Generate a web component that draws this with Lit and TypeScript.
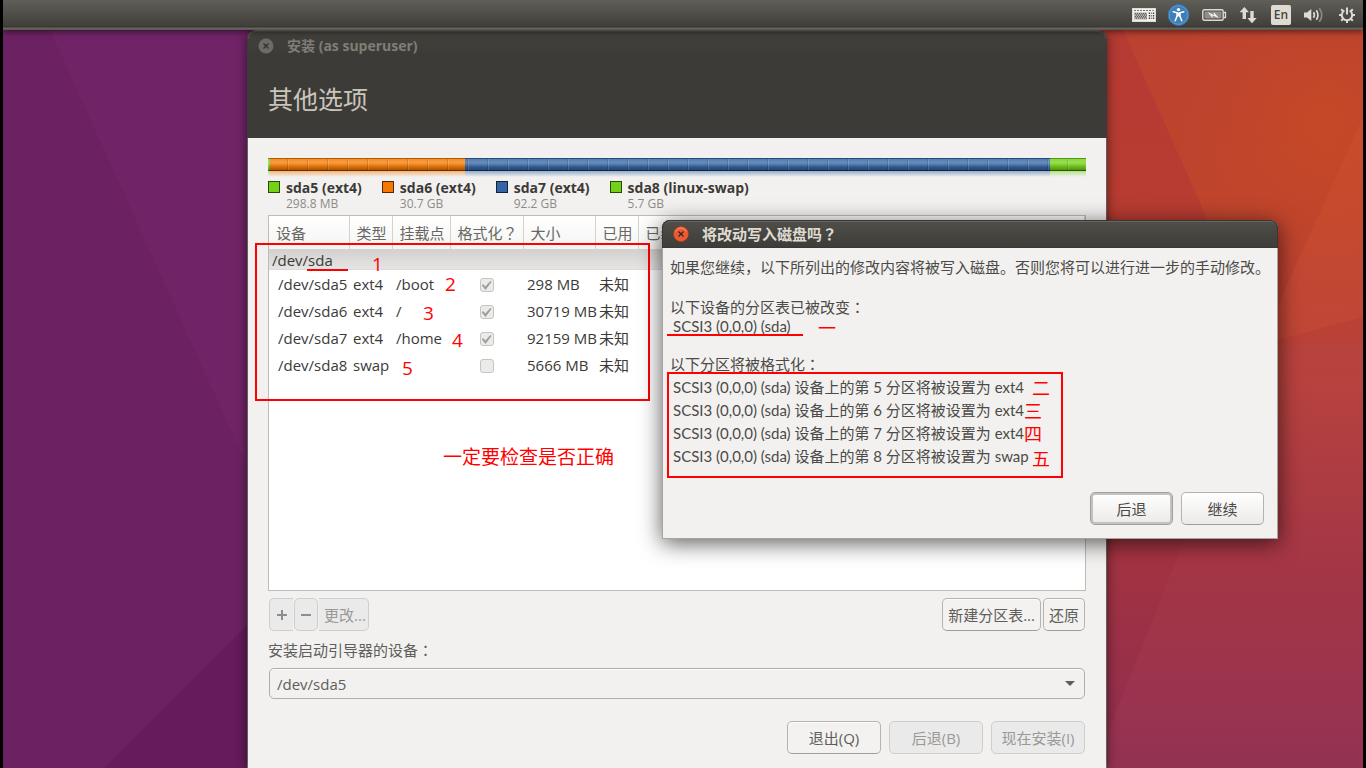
import { LitElement, html, css, svg } from "lit";
import { customElement } from "lit/decorators.js";
import { classMap } from "lit/directives/class-map.js";
import { styleMap } from "lit/directives/style-map.js";

const fontStack = css`"Open Sans", "Noto Sans CJK SC", sans-serif`;

interface Partition {
  device: string;
  type: string;
  mount: string;
  format: boolean;
  size: string;
  used: string;
}

const partitions: Partition[] = [
  { device: "/dev/sda5", type: "ext4", mount: "/boot", format: true, size: "298 MB", used: "未知" },
  { device: "/dev/sda6", type: "ext4", mount: "/", format: true, size: "30719 MB", used: "未知" },
  { device: "/dev/sda7", type: "ext4", mount: "/home", format: true, size: "92159 MB", used: "未知" },
  { device: "/dev/sda8", type: "swap", mount: "", format: false, size: "5666 MB", used: "未知" },
];

const segments = [
  { name: "sda5 (ext4)", size: "298.8 MB", color: "#73d216", share: 2 },
  { name: "sda6 (ext4)", size: "30.7 GB", color: "#f57900", share: 195 },
  { name: "sda7 (ext4)", size: "92.2 GB", color: "#3465a4", share: 585 },
  { name: "sda8 (linux-swap)", size: "5.7 GB", color: "#73d216", share: 36 },
];

const formatted = [
  { part: "5", fs: "ext4" },
  { part: "6", fs: "ext4" },
  { part: "7", fs: "ext4" },
  { part: "8", fs: "swap" },
];

interface Note {
  text: string;
  x: number;
  y: number;
}

// Offsets are relative to the window each note belongs to.
const windowNotes: Note[] = [
  { text: "1", x: 124, y: 219 },
  { text: "2", x: 197, y: 239 },
  { text: "3", x: 175, y: 268 },
  { text: "4", x: 204, y: 295 },
  { text: "5", x: 154, y: 323 },
  { text: "一定要检查是否正确", x: 195, y: 412 },
];

const dialogNotes: Note[] = [
  { text: "一", x: 156, y: 94 },
  { text: "二", x: 370, y: 154 },
  { text: "三", x: 362, y: 177 },
  { text: "四", x: 362, y: 200 },
  { text: "五", x: 370, y: 225 },
];

const renderNotes = (notes: Note[]) =>
  notes.map(
    (n) => html`<span class="note" style=${styleMap({ left: `${n.x}px`, top: `${n.y}px` })}>${n.text}</span>`
  );

const noteStyles = css`
  .note {
    position: absolute;
    color: #f00;
    font-size: 19px;
    line-height: 28px;
    white-space: nowrap;
    pointer-events: none;
  }
  .box,
  .underline {
    position: absolute;
    pointer-events: none;
  }
  .box {
    border: 2px solid #f00;
  }
  .underline {
    height: 2px;
    background: #f00;
  }
`;

const controlStyles = css`
  * {
    box-sizing: border-box;
  }
  button,
  select {
    font: inherit;
    color: inherit;
    margin: 0;
  }
  .btn {
    height: 33px;
    padding: 0 5px;
    border: 1px solid #b5b3af;
    border-bottom-color: #9f9d99;
    border-radius: 5px;
    background: #f3f2f1;
    box-shadow: inset 0 1px #fcfcfb;
    color: #5f5d59;
    white-space: nowrap;
  }
  .btn:disabled {
    background: #eaeaea;
    border-color: #cfcecb;
    box-shadow: none;
    color: #9b9995;
  }
  .wide {
    font-family: "Noto Sans CJK JP", sans-serif;
  }
  .close {
    display: grid;
    width: 16px;
    height: 16px;
    padding: 0;
    border: 0;
    background: none;
  }
`;

@customElement("desktop-wallpaper")
class DesktopWallpaper extends LitElement {
  static styles = css`
    :host {
      display: block;
    }
    svg {
      display: block;
      width: 100%;
      height: 100%;
    }
  `;
  render() {
    return html`<svg viewBox="3 0 1360 768" preserveAspectRatio="none" aria-hidden="true">
      <defs>
        <linearGradient id="warm" x1="0" y1="0" x2="0" y2="1">
          <stop offset="0" stop-color="#bb4232" />
          <stop offset=".25" stop-color="#bf442d" />
          <stop offset=".5" stop-color="#b7403a" />
          <stop offset=".75" stop-color="#a03242" />
          <stop offset="1" stop-color="#8f2e52" />
        </linearGradient>
        <radialGradient id="glow" gradientUnits="userSpaceOnUse" cx="1325" cy="125" r="240">
          <stop offset="0" stop-color="#c94a25" stop-opacity=".8" />
          <stop offset="1" stop-color="#b9402f" stop-opacity="0" />
        </radialGradient>
      </defs>
      <rect width="684" height="768" fill="#6c2262" />
      <path d="M50 30L248 468V30z" fill="#702467" />
      <path d="M104 768L248 624V768z" fill="#651b5c" />
      <rect x="683" width="683" height="768" fill="url(#warm)" />
      <rect x="683" width="683" height="768" fill="url(#glow)" />
      <path d="M1106 30H1123L1210 225H1106z" fill="#a92c3c" fill-opacity=".3" />
      <path d="M1363 117L1278 305V340L1363 317z" fill="#e5653d" fill-opacity=".16" />
      <path d="M1184 540L1108 732V768H1363V340L1278 345z" fill="#b8505a" fill-opacity=".14" />
    </svg>`;
  }
}

@customElement("top-panel")
class TopPanel extends LitElement {
  static styles = css`
    :host {
      display: flex;
      align-items: center;
      justify-content: flex-end;
      gap: 12px;
      height: 30px;
      padding: 0 8px;
      box-sizing: border-box;
      background: linear-gradient(#5f5e57, #403f3a 26px, #33322e 27px, #6b695f 28px, #55544d 30px);
      box-shadow: 0 2px 6px rgba(0, 0, 0, 0.5);
      font-family: ${fontStack};
    }
    button {
      display: block;
      padding: 0;
      border: 0;
      background: none;
      color: #dfdbd2;
      font: inherit;
    }
    svg {
      display: block;
    }
    .lang {
      width: 20px;
      height: 20px;
      border-radius: 2px;
      background: #dfdbd2;
      color: #45443f;
      font-size: 12px;
      font-weight: 600;
      line-height: 20px;
    }
  `;
  render() {
    const keys = [];
    for (let r = 0; r < 4; r++)
      for (let c = 0; c < 6; c++)
        keys.push(svg`<rect x=${3 + c * 2 + (r % 2)} y=${10 + r * 1.5} width="1" height="1.2" fill="#5c5b57"/>`);
    return html`
      <button aria-label="键盘">
        <svg width="24" height="24" viewBox="0 0 24 24">
          <rect y="5" width="24" height="14" fill="#dddbd6" />
          <rect x="1" y="6" width="22" height="12" fill="#f1f0ed" />
          <path d="M2 7.5h20" stroke="#77756f" stroke-dasharray="2 1" />
          <rect x="2" y="9.5" width="13" height="7" fill="#b5b3ad" />
          ${keys}
          <path d="M17.5 9.5v7M21.5 9.5v7" stroke="#44423e" stroke-width="1.4" stroke-dasharray="1.6 .9" />
          <path d="M19.5 9.5v7" stroke="#8a8883" stroke-width="1" stroke-dasharray="1.6 .9" />
          <path d="M20 7.5h2" stroke="#6abf3a" />
        </svg>
      </button>
      <button aria-label="辅助功能">
        <svg width="22" height="22" viewBox="0 0 22 22">
          <circle cx="10.5" cy="11" r="10.4" fill="#3f7fb8" stroke="#3a75ad" />
          <circle cx="10.5" cy="11" r="9.3" fill="none" stroke="#5f9bcd" />
          <circle cx="10.5" cy="5.6" r="1.7" fill="#fff" />
          <path d="M5.2 7.8l4 1v3L7.2 16.8M15.8 7.8l-4 1v3l2 5" fill="none" stroke="#fff" stroke-width="1.5" stroke-linecap="round" />
          <path d="M8.6 8.4h3.8v4.6l-1.9-.7-1.9.7z" fill="#fff" />
        </svg>
      </button>
      <button aria-label="电池">
        <svg width="25" height="12" viewBox="0 0 25 12">
          <rect x=".8" y=".8" width="20.4" height="10.4" rx="1.5" fill="none" stroke="#dfdbd2" stroke-width="1.4" />
          <rect x="2.5" y="2.5" width="17" height="7" fill="#908e86" />
          <path d="M22 3.5h1.5v5H22" fill="none" stroke="#dfdbd2" stroke-width="1.3" />
          <path d="M5.5 3l6.5 3 -.3-3 5.3 6.2-6.5-2.7.3 2.7z" fill="#f3f1eb" />
        </svg>
      </button>
      <button aria-label="网络">
        <svg width="20" height="18" viewBox="0 0 20 18" fill="currentColor">
          <path d="M5.3 1L10 6.3H7V13H3.6V6.3H.6z" />
          <path d="M13 17.2L8.3 12h3V5h3.4v7h3z" />
        </svg>
      </button>
      <button class="lang">En</button>
      <button aria-label="音量">
        <svg width="24" height="18" viewBox="0 0 24 18" fill="none" stroke="currentColor" stroke-width="1.7">
          <path d="M1 6.5h3L8.3 3v12L4 11.5H1z" fill="currentColor" stroke="none" />
          <path d="M10.5 6.3q1.8 2.7 0 5.4M13.3 4.2q3.3 4.8 0 9.6" />
          <path d="M16.3 2.2q5 6.8 0 13.6" stroke="#8b8981" />
        </svg>
      </button>
      <button aria-label="系统">
        <svg width="16" height="18" viewBox="0 0 16 18" fill="none" stroke="currentColor" stroke-width="2">
          <path d="M5.4 4.5a5.2 5.2 0 1 0 5.2 0" />
          <path d="M8 1.5v7" />
          <path d="M0 9h3M13 9h3M8 14v3M2.2 3.2l2 2M13.8 3.2l-2 2M2.2 14.8l2-2M13.8 14.8l-2-2" />
        </svg>
      </button>
    `;
  }
}

@customElement("installer-window")
class InstallerWindow extends LitElement {
  static styles = [
    controlStyles,
    noteStyles,
    css`
      :host {
        display: flex;
        flex-direction: column;
        box-sizing: border-box;
        border-radius: 8px 8px 0 0;
        background: #f2f1f0;
        box-shadow: 0 2px 12px rgba(0, 0, 0, 0.65), 0 0 0 1px #8f8b86;
        font: 15px/20px ${fontStack};
        color: #4c4a47;
      }
      header {
        height: 107px;
        border-radius: 8px 8px 0 0;
        background: linear-gradient(#42413c, #3c3b37 24px);
        box-shadow: inset 0 1px #53524b, 0 0 0 1px #3c3b37;
        clip-path: inset(0 -1px);
      }
      .title {
        display: flex;
        align-items: center;
        gap: 13px;
        height: 30px;
        padding: 0 10px;
        font-size: 14px;
        font-weight: 700;
        color: #807e77;
      }
      h1 {
        margin: 0;
        padding: 19px 20px 0;
        font-size: 25px;
        line-height: 38px;
        font-weight: 400;
        color: #c9c5bb;
      }
      main {
        display: flex;
        flex: 1;
        flex-direction: column;
        padding: 20px 20px 14px;
      }
      .usage {
        display: flex;
        height: 20px;
        position: relative;
      }
      .segment {
        background: var(--c);
      }
      .gloss {
        position: absolute;
        inset: 0;
        background: linear-gradient(
          rgba(0, 0, 0, 0.28) 1px,
          rgba(255, 255, 255, 0.16) 1px,
          rgba(255, 255, 255, 0.26) 5px,
          rgba(0, 0, 0, 0.12) 9px,
          rgba(0, 0, 0, 0.3) 12px,
          rgba(0, 0, 0, 0.6) 12px,
          rgba(0, 0, 0, 0.6) 13px,
          rgba(242, 241, 240, 0.5) 13px,
          #f2f1f0 19px
        );
      }
      .ticks {
        position: absolute;
        inset: 1px 0 auto;
        height: 11px;
        background: repeating-linear-gradient(
          90deg,
          rgba(255, 255, 255, 0.14) 0 1px,
          transparent 1px 19px,
          rgba(0, 0, 0, 0.13) 19px 20px
        );
      }
      .legend {
        display: flex;
        gap: 20px;
        margin: 0;
        padding: 0 0 5px;
        list-style: none;
      }
      .legend li {
        display: grid;
        grid-template-columns: 12px auto;
        column-gap: 6px;
      }
      .swatch {
        width: 12px;
        height: 12px;
        margin-top: 3px;
        border: 1px solid rgba(0, 0, 0, 0.65);
        background: var(--c);
      }
      .legend strong {
        font-size: 14px;
        line-height: 20px;
        color: #3c3a37;
      }
      .legend small {
        grid-column: 2;
        font-size: 12px;
        line-height: 12px;
        color: #8e8b86;
      }
      .list {
        flex: 1;
        border: 1px solid #bfbbb6;
        background: #fff;
        overflow: hidden;
      }
      table {
        width: 100%;
        table-layout: fixed;
        border-collapse: collapse;
      }
      .c-device {
        width: 80px;
      }
      .c-type,
      .c-used {
        width: 43px;
      }
      .c-mount {
        width: 58px;
      }
      .c-format {
        width: 73px;
      }
      .c-size {
        width: 72px;
      }
      th {
        height: 33px;
        padding: 1px 0 0 7px;
        border-right: 1px solid #d4d2cf;
        border-bottom: 1px solid #d4d2cf;
        background: linear-gradient(#fff, #f4f4f3);
        font-weight: 400;
        text-align: left;
        white-space: nowrap;
        color: #696763;
      }
      td {
        height: 27px;
        padding: 0 0 0 4px;
        white-space: nowrap;
        color: #3c3a37;
      }
      td.device {
        padding-left: 9px;
      }
      tr.disk td {
        height: 21px;
        padding-left: 3px;
        background: linear-gradient(#d3d1cf, #e6e5e3);
      }
      td.format {
        padding: 0;
        text-align: center;
      }
      input {
        appearance: none;
        display: inline-grid;
        place-items: center;
        width: 14px;
        height: 14px;
        margin: 0;
        vertical-align: middle;
        border: 1px solid #c6c5c2;
        border-radius: 3px;
        background: #ebebea;
      }
      input:checked::before {
        content: "";
        width: 10px;
        height: 9px;
        background: #a09f9c;
        clip-path: polygon(0 45%, 18% 35%, 38% 62%, 88% 0, 100% 12%, 40% 100%);
      }
      .actions {
        display: flex;
        gap: 2px;
        padding: 7px 1px 0;
      }
      .cluster {
        display: grid;
        grid-template-columns: 24px 24px 50px;
        gap: 1px;
        margin-right: auto;
      }
      .cluster .btn {
        display: grid;
        place-items: center;
      }
      .cluster .btn:first-child {
        border-right: 0;
        border-radius: 5px 0 0 5px;
      }
      .cluster .btn:last-child {
        border-left: 0;
        border-radius: 0 5px 5px 0;
      }
      .boot {
        display: block;
        padding: 9px 0 8px;
        color: #605e5a;
      }
      .combo {
        display: grid;
        align-items: center;
        margin: 0 1px 22px;
      }
      .combo select,
      .combo svg {
        grid-area: 1 / 1;
      }
      .combo select {
        appearance: none;
        width: 100%;
        height: 31px;
        padding: 0 7px;
        border: 1px solid #b0aeaa;
        border-radius: 5px;
        background: #f2f1f0;
        box-shadow: inset 0 1px #fcfcfb;
        color: #605e5a;
      }
      .combo svg {
        justify-self: end;
        margin-right: 9px;
        pointer-events: none;
      }
      .nav {
        display: grid;
        grid-template-columns: repeat(3, 94px);
        justify-content: end;
        gap: 8px;
        padding: 0 1px;
      }
      .box {
        left: 7px;
        top: 212px;
        width: 395px;
        height: 158px;
      }
      .underline {
        left: 59px;
        top: 238px;
        width: 41px;
      }
    `,
  ];
  render() {
    return html`
      <header>
        <div class="title">
          <button class="close" aria-label="关闭">
            <svg width="16" height="16" viewBox="0 0 16 16">
              <circle cx="8" cy="8" r="7.5" fill="#6d6b66" />
              <path d="M5.5 5.5l5 5M10.5 5.5l-5 5" stroke="#32312d" stroke-width="1.3" />
            </svg>
          </button>
          <span>安装 (as superuser)</span>
        </div>
        <h1>其他选项</h1>
      </header>
      <main>
        <div class="usage">
          ${segments.map((s) => html`<div class="segment" style=${styleMap({ "--c": s.color, flex: `${s.share} 1 0` })}></div>`)}
          <div class="gloss"></div>
          <div class="ticks"></div>
        </div>
        <ul class="legend">
          ${segments.map(
            (s) => html`<li>
              <span class="swatch" style=${styleMap({ "--c": s.color })}></span><strong>${s.name}</strong
              ><small>${s.size}</small>
            </li>`
          )}
        </ul>
        <div class="list">
          <table>
            <colgroup>
              <col class="c-device" />
              <col class="c-type" />
              <col class="c-mount" />
              <col class="c-format" />
              <col class="c-size" />
              <col class="c-used" />
              <col />
            </colgroup>
            <thead>
              <tr>
                <th>设备</th>
                <th>类型</th>
                <th>挂载点</th>
                <th>格式化<span class="wide">？</span></th>
                <th>大小</th>
                <th>已用</th>
                <th>已装系统</th>
              </tr>
            </thead>
            <tbody>
              <tr class="disk">
                <td colspan="7">/dev/sda</td>
              </tr>
              ${partitions.map(
                (p) => html`<tr>
                  <td class="device">${p.device}</td>
                  <td>${p.type}</td>
                  <td>${p.mount}</td>
                  <td class="format">
                    <input type="checkbox" disabled aria-label=${`格式化 ${p.device}`} .checked=${p.format} />
                  </td>
                  <td>${p.size}</td>
                  <td>${p.used}</td>
                  <td></td>
                </tr>`
              )}
            </tbody>
          </table>
        </div>
        <div class="actions">
          <div class="cluster">
            <button class="btn" disabled aria-label="添加">
              <svg width="12" height="12"><path d="M1 6h10M6 1v10" stroke="#8f8d89" stroke-width="2" /></svg>
            </button>
            <button class="btn" disabled aria-label="删除">
              <svg width="12" height="12"><path d="M1 6h10" stroke="#8f8d89" stroke-width="2" /></svg>
            </button>
            <button class="btn" disabled>更改...</button>
          </div>
          <button class="btn">新建分区表...</button>
          <button class="btn">还原</button>
        </div>
        <label class="boot" for="boot">安装启动引导器的设备<span class="wide">：</span></label>
        <div class="combo">
          <select id="boot">
            <option>/dev/sda5</option>
          </select>
          <svg width="12" height="6"><path d="M1 0h10L6 5z" fill="#5f5d59" /></svg>
        </div>
        <div class="nav">
          <button class="btn">退出(Q)</button>
          <button class="btn" disabled>后退(B)</button>
          <button class="btn" disabled>现在安装(I)</button>
        </div>
      </main>
      <div class="box"></div>
      <div class="underline"></div>
      ${renderNotes(windowNotes)}
    `;
  }
}

@customElement("confirm-dialog")
class ConfirmDialog extends LitElement {
  static styles = [
    controlStyles,
    noteStyles,
    css`
      :host {
        display: block;
        box-sizing: border-box;
        border-radius: 8px 8px 0 0;
        background: #f2f1f0;
        box-shadow: 0 4px 22px rgba(0, 0, 0, 0.65), inset 0 0 0 1px #a8a59f;
        font: 15px/20px ${fontStack};
        color: #4c4a47;
      }
      .title {
        display: flex;
        align-items: center;
        gap: 13px;
        height: 28px;
        padding: 0 11px;
        border-radius: 8px 8px 0 0;
        background: linear-gradient(#504f49, #3d3c38);
        box-shadow: inset 0 0 0 1px #383733, inset 0 2px #67655d;
        color: #dfdbd2;
        font-weight: 700;
      }
      .body {
        padding: 9px 8px 0;
      }
      p {
        margin: 0 0 20px;
        white-space: nowrap;
      }
      .lead {
        margin: 0;
      }
      .device,
      ul {
        font-family: Lato, "Noto Sans CJK SC", sans-serif;
      }
      .device {
        margin: 0 0 19px;
        padding-left: 3px;
        line-height: 18px;
      }
      ul {
        margin: 0;
        padding: 2px 3px 0;
        list-style: none;
        line-height: 23px;
      }
      .buttons {
        display: grid;
        grid-template-columns: repeat(2, 83px);
        justify-content: end;
        gap: 8px;
        padding: 24px 14px 14px;
      }
      .btn {
        background: linear-gradient(#fff, #eceae8);
        color: #4c4a47;
      }
      .btn.default {
        border-color: #a19f9b;
        box-shadow: inset 0 0 0 2px #c4c2bf;
      }
      .note {
        font-size: 18px;
      }
      .device-line {
        left: 5px;
        top: 114px;
        width: 136px;
      }
      .box {
        left: 5px;
        top: 152px;
        width: 396px;
        height: 106px;
      }
    `,
  ];
  render() {
    return html`
      <div class="title">
        <button class="close" aria-label="关闭">
          <svg width="16" height="16" viewBox="0 0 16 16">
            <circle cx="8" cy="8" r="7.5" fill="#e95c33" stroke="#b53d18" stroke-width=".6" />
            <path d="M2.5 5.5a6 6 0 0 1 11 0" fill="none" stroke="#f79273" />
            <path d="M5.5 5.5l5 5M10.5 5.5l-5 5" stroke="#40221a" stroke-width="1.3" />
          </svg>
        </button>
        <span>将改动写入磁盘吗<span class="wide">？</span></span>
      </div>
      <div class="body">
        <p>如果您继续，以下所列出的修改内容将被写入磁盘。否则您将可以进行进一步的手动修改。</p>
        <p class="lead">以下设备的分区表已被改变<span class="wide">：</span></p>
        <p class="device">SCSI3 (0,0,0) (sda)</p>
        <p class="lead">以下分区将被格式化<span class="wide">：</span></p>
        <ul>
          ${formatted.map((f) => html`<li>SCSI3 (0,0,0) (sda) 设备上的第 ${f.part} 分区将被设置为 ${f.fs}</li>`)}
        </ul>
      </div>
      <div class="buttons">
        ${["后退", "继续"].map((t, i) => html`<button class=${classMap({ btn: true, default: i === 0 })}>${t}</button>`)}
      </div>
      <div class="underline device-line"></div>
      <div class="box"></div>
      ${renderNotes(dialogNotes)}
    `;
  }
}

@customElement("app-root")
class AppRoot extends LitElement {
  static styles = css`
    :host {
      display: flex;
      min-height: 100vh;
      padding: 0 3px;
      box-sizing: border-box;
      position: relative;
      overflow: hidden;
      background: #000;
    }
    top-panel {
      flex: 1;
      z-index: 1;
    }
    desktop-wallpaper {
      position: absolute;
      inset: 0 3px;
    }
    installer-window {
      position: absolute;
      inset: 31px 260px 0 248px;
    }
    confirm-dialog {
      position: absolute;
      left: 662px;
      top: 220px;
    }
  `;
  render() {
    return html`
      <desktop-wallpaper></desktop-wallpaper>
      <top-panel></top-panel>
      <installer-window></installer-window>
      <confirm-dialog></confirm-dialog>
    `;
  }
}
